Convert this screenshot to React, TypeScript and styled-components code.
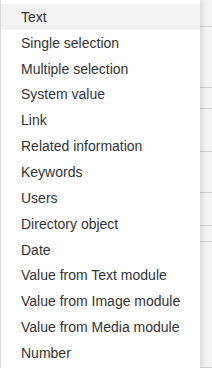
import styled, { createGlobalStyle } from "styled-components";

const GlobalStyle = createGlobalStyle`
  html, body {
    margin: 0;
    padding: 0;
    background: #f4f4f4;
  }
  body {
    font-family: "Liberation Sans", Arial, Helvetica, sans-serif;
  }
`;

const items = [
  "Text",
  "Single selection",
  "Multiple selection",
  "System value",
  "Link",
  "Related information",
  "Keywords",
  "Users",
  "Directory object",
  "Date",
  "Value from Text module",
  "Value from Image module",
  "Value from Media module",
  "Number",
];

// rows of the table that sits behind the open menu
const backRows = [27, 61, 21, 43, 41, 33, 16, 126];

const Page = styled.div`
  position: relative;
  width: 212px;
  height: 368px;
  overflow: hidden;
`;

const Table = styled.div`
  display: flex;
  flex-direction: column;
`;

const TableRow = styled.div<{ $h: number }>`
  height: ${(p) => p.$h}px;
  border-bottom: 1px solid #cfcfcf;
  box-sizing: border-box;
  background: #f4f4f4;
`;

const Menu = styled.ul`
  position: absolute;
  top: 0;
  left: 0;
  width: 200px;
  height: 368px;
  margin: 0;
  padding: 4px 0 0;
  list-style: none;
  background: #fff;
  border-left: 1px solid #d8d8d8;
  box-sizing: border-box;
  box-shadow: 2px 0 6px rgba(0, 0, 0, 0.14);
`;

const Item = styled.li<{ $active?: boolean }>`
  height: 25.85px;
  display: flex;
  align-items: center;
  padding-left: 20px;
  font-size: 14px;
  color: #333;
  background: ${(p) => (p.$active ? "#f2f2f2" : "transparent")};
  white-space: nowrap;
  cursor: pointer;
`;

export default function App() {
  return (
    <Page>
      <GlobalStyle />
      <Table>
        {backRows.map((h, i) => (
          <TableRow key={i} $h={h} />
        ))}
      </Table>
      <Menu>
        {items.map((label, i) => (
          <Item key={label} $active={i === 0}>
            {label}
          </Item>
        ))}
      </Menu>
    </Page>
  );
}
